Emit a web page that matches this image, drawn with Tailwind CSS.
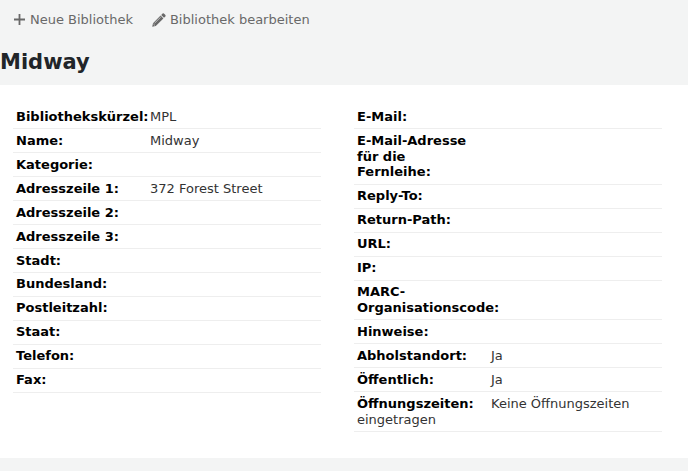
<!DOCTYPE html>
<html lang="de">
<head>
    <meta charset="UTF-8">
    <script src="https://cdn.jsdelivr.net/npm/@tailwindcss/browser@4"></script>
    <title>Midway</title>
</head>
<body class="bg-[#f3f4f4] font-['DejaVu_Sans',sans-serif] text-[13px] leading-[15.84px] text-[#333] h-[471px] overflow-hidden">
    <!-- toolbar -->
    <div class="flex items-center h-[39px] pl-[14px] gap-[19px] text-[#696969]">
        <a class="flex items-center gap-[5px]">
            <svg class="w-[11px] h-[11px]" viewBox="0 0 11 11"><path d="M5.5 0v11M0 5.5h11" stroke="#696969" stroke-width="1.8" fill="none"/></svg>
            <span>Neue Bibliothek</span>
        </a>
        <a class="flex items-center gap-[4px]">
            <svg class="w-[14px] h-[14px]" viewBox="0 0 14 14"><path d="M10.6 0.6a1 1 0 0 1 1.3 0l1.5 1.5a1 1 0 0 1 0 1.3l-1.4 1.4-2.8-2.8zM8.6 2.6l2.8 2.8-7.6 7.6-3.6.8.8-3.6z" fill="#696969"/><path d="M2.6 10.2l6.2-6.2M1.4 11l1.6 1.6" stroke="#f3f4f4" stroke-width="0.6" fill="none"/></svg>
            <span>Bibliothek bearbeiten</span>
        </a>
    </div>
    <h1 class="h-[46px] pt-[10px] text-[21px] leading-[27px] font-bold text-[#212529]">Midway</h1>
    <!-- detail box -->
    <div class="bg-white h-[373px] pl-[13px] pt-[20.13px] flex gap-[33px]">
        <ul class="w-[308px] [&>li]:flow-root [&>li]:pl-[3px] [&>li]:py-[3.575px] [&>li]:border-b [&>li]:border-[#eee] [&_b]:float-left [&_b]:w-[117px] [&_b]:mr-[17px] [&_b]:text-black">
            <li><b>Bibliothekskürzel:</b>MPL</li>
            <li><b>Name:</b>Midway</li>
            <li><b>Kategorie:</b></li>
            <li><b>Adresszeile 1:</b>372 Forest Street</li>
            <li><b>Adresszeile 2:</b></li>
            <li><b>Adresszeile 3:</b></li>
            <li><b>Stadt:</b></li>
            <li><b>Bundesland:</b></li>
            <li><b>Postleitzahl:</b></li>
            <li><b>Staat:</b></li>
            <li><b>Telefon:</b></li>
            <li><b>Fax:</b></li>
        </ul>
        <ul class="w-[308px] [&>li]:flow-root [&>li]:pl-[3px] [&>li]:py-[3.575px] [&>li]:border-b [&>li]:border-[#eee] [&_b]:float-left [&_b]:w-[117px] [&_b]:mr-[17px] [&_b]:text-black">
            <li><b>E-Mail:</b></li>
            <li><b>E-Mail-Adresse für die Fernleihe:</b></li>
            <li><b>Reply-To:</b></li>
            <li><b>Return-Path:</b></li>
            <li><b>URL:</b></li>
            <li><b>IP:</b></li>
            <li><b>MARC-Organisationscode:</b></li>
            <li><b>Hinweise:</b></li>
            <li><b>Abholstandort:</b>Ja</li>
            <li><b>Öffentlich:</b>Ja</li>
            <li><b>Öffnungszeiten:</b>Keine Öffnungszeiten eingetragen</li>
        </ul>
    </div>
</body>
</html>
